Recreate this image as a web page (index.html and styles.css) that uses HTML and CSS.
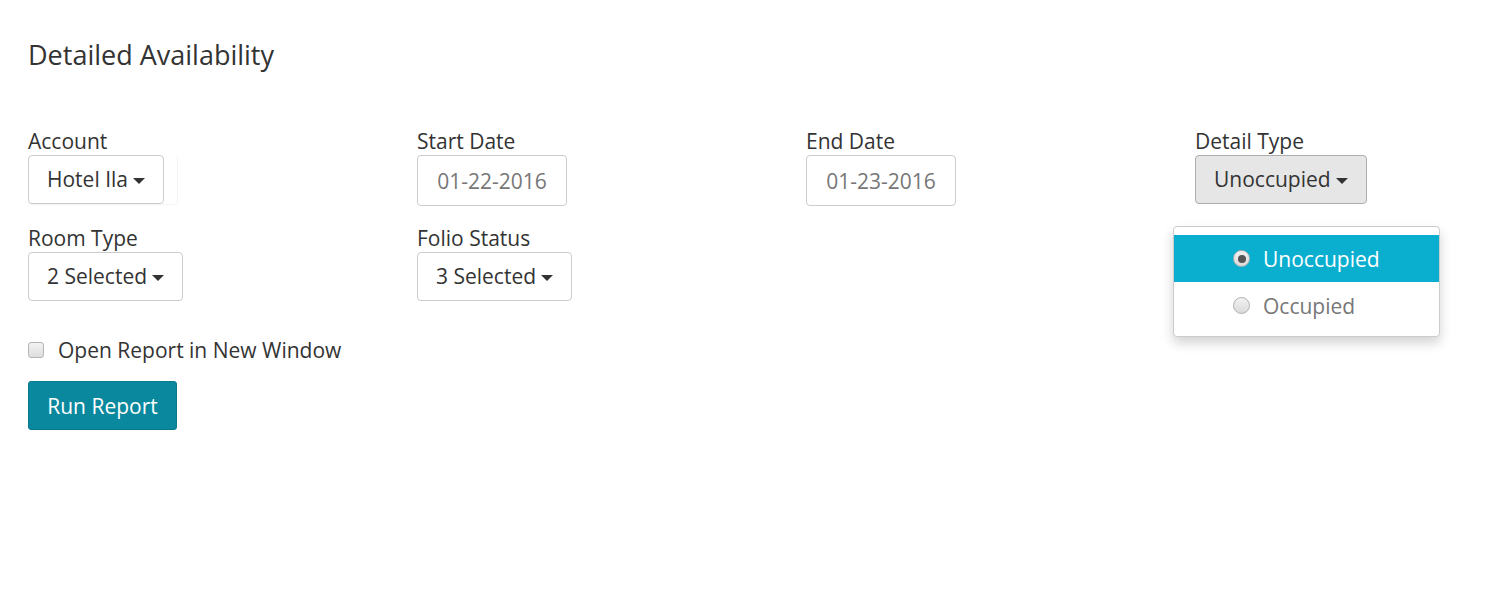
FILE: index.html
```html
<!DOCTYPE html>
<html>
<head>
<meta charset="utf-8">
<link rel="stylesheet" href="styles.css">
</head>
<body>
<div class="page">
  <h1 class="title">Detailed Availability</h1>
  <div class="grid">
    <div class="field">
      <label class="label">Account</label>
      <div class="acct-wrap">
        <button class="btn">Hotel Ila <span class="caret"></span></button>
      </div>
    </div>
    <div class="field">
      <label class="label">Start Date</label>
      <div class="input">01-22-2016</div>
    </div>
    <div class="field">
      <label class="label">End Date</label>
      <div class="input">01-23-2016</div>
    </div>
    <div class="field detail">
      <label class="label">Detail Type</label>
      <button class="btn active">Unoccupied <span class="caret"></span></button>
      <div class="menu">
        <div class="item selected"><span class="radio on"></span>Unoccupied</div>
        <div class="item"><span class="radio"></span>Occupied</div>
      </div>
    </div>
    <div class="field">
      <label class="label">Room Type</label>
      <button class="btn">2 Selected <span class="caret"></span></button>
    </div>
    <div class="field">
      <label class="label">Folio Status</label>
      <button class="btn">3 Selected <span class="caret"></span></button>
    </div>
  </div>
  <div class="check-row">
    <span class="checkbox"></span>
    <span>Open Report in New Window</span>
  </div>
  <button class="run">Run Report</button>
</div>
</body>
</html>
```
FILE: styles.css
```css
html, body {
  margin: 0;
  padding: 0;
  background: #fff;
}
body {
  font-family: "Open Sans", "Liberation Sans", sans-serif;
  color: #333;
  font-size: 21px;
}
.page {
  padding: 37px 0 0 28px;
}
.title {
  margin: 0;
  font-weight: 400;
  font-size: 27px;
  line-height: 36px;
  color: #333;
}
.grid {
  margin-top: 54px;
  display: grid;
  grid-template-columns: 389px 389px 389px 1fr;
  row-gap: 18px;
}
.field {
  display: flex;
  flex-direction: column;
  align-items: flex-start;
}
.label {
  font-size: 21px;
  line-height: 28px;
}
.acct-wrap {
  border: 1px solid #f4f4f4;
  border-left: none;
  border-top: none;
  padding-right: 13px;
  border-radius: 4px;
}
.btn {
  font-family: inherit;
  font-size: 21px;
  color: #333;
  background: #fff;
  border: 1px solid #ccc;
  border-radius: 4px;
  height: 49px;
  padding: 0 18px;
  display: flex;
  align-items: center;
  gap: 5px;
  line-height: 1;
}
.btn.active {
  background: #e6e6e6;
  border-color: #adadad;
}
.caret {
  width: 0;
  height: 0;
  border-left: 6px solid transparent;
  border-right: 6px solid transparent;
  border-top: 6px solid #333;
  margin-top: 2px;
}
.input {
  box-sizing: border-box;
  height: 51px;
  width: 150px;
  border: 1px solid #ccc;
  border-radius: 4px;
  color: #777;
  display: flex;
  align-items: center;
  justify-content: center;
  font-size: 21px;
}
.detail {
  position: relative;
}
.menu {
  position: absolute;
  top: 99px;
  left: -22px;
  width: 267px;
  box-sizing: border-box;
  background: #fff;
  border: 1px solid #ccc;
  border-radius: 4px;
  box-shadow: 0 6px 12px rgba(0,0,0,0.175);
  padding: 8px 0 7px;
  z-index: 2;
}
.item {
  height: 47px;
  display: flex;
  align-items: center;
  padding-left: 59px;
  color: #777;
  font-size: 21px;
}
.item.selected {
  background: #0aafd0;
  color: #fff;
}
.radio {
  width: 17px;
  height: 17px;
  border-radius: 50%;
  box-sizing: border-box;
  border: 1px solid #b0b0b0;
  background: linear-gradient(#f2f2f2, #dadada);
  margin-right: 13px;
  position: relative;
}
.radio.on::after {
  content: "";
  position: absolute;
  left: 3.5px;
  top: 3.5px;
  width: 8px;
  height: 8px;
  border-radius: 50%;
  background: #555;
}
.check-row {
  margin-top: 35px;
  display: flex;
  align-items: center;
  gap: 14px;
  line-height: 28px;
}
.checkbox {
  width: 16px;
  height: 16px;
  box-sizing: border-box;
  border: 1px solid #b5b5b5;
  border-radius: 3px;
  background: linear-gradient(#f3f3f3, #dedede);
}
.run {
  margin-top: 17px;
  font-family: inherit;
  font-size: 21px;
  color: #fff;
  background: #0a889e;
  border: 1px solid #087a8e;
  border-radius: 3px;
  width: 149px;
  height: 49px;
  padding: 0;
}
```
